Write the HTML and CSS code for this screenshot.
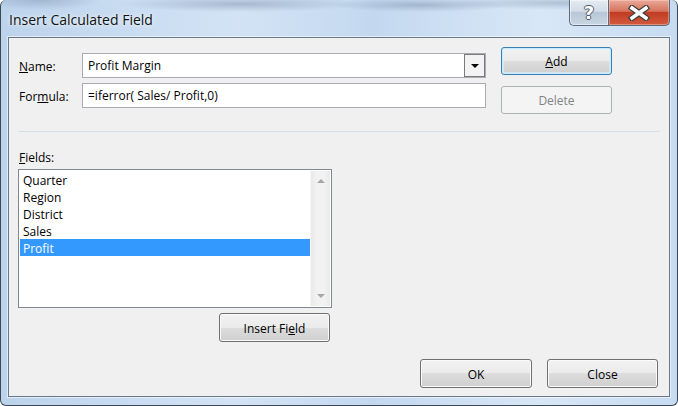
FILE: index.html
```html
<!DOCTYPE html>
<html>
<head>
    <meta charset="utf-8">
    <link rel="stylesheet" href="styles.css">
</head>
<body>

<div class="window">
    <div class="titlebar">
        <div class="title">Insert Calculated Field</div>
        <div class="caption">
            <div class="cap_btn help"><span>?</span></div>
            <div class="cap_btn close">
                <svg width="22" height="16" viewBox="0 0 22 16">
                    <path d="M4 3 L18 13 M18 3 L4 13" stroke="#3d3d3d" stroke-width="6" stroke-linecap="square"/>
                    <path d="M4 3 L18 13 M18 3 L4 13" stroke="#ffffff" stroke-width="3.5" stroke-linecap="square"/>
                </svg>
            </div>
        </div>
    </div>

    <div class="client">
        <div class="top">
            <div class="form">
                <div class="row">
                    <div class="label"><u>N</u>ame:</div>
                    <div class="field combo">
                        <span>Profit Margin</span>
                        <div class="drop"><i class="tri_down"></i></div>
                    </div>
                </div>
                <div class="row">
                    <div class="label">For<u>m</u>ula:</div>
                    <div class="field">=iferror( Sales/ Profit,0)</div>
                </div>
            </div>
            <div class="side">
                <div class="btn default"><span><u>A</u>dd</span></div>
                <div class="btn disabled">Delete</div>
            </div>
        </div>

        <div class="sep"></div>

        <div class="fields_label"><u>F</u>ields:</div>
        <div class="listbox">
            <ul class="items">
                <li>Quarter</li>
                <li>Region</li>
                <li>District</li>
                <li>Sales</li>
                <li class="selected">Profit</li>
            </ul>
            <div class="scrollbar">
                <i class="arrow_up"></i>
                <i class="arrow_down"></i>
            </div>
        </div>
        <div class="btn insert">Insert Fi<u>e</u>ld</div>

        <div class="footer">
            <div class="btn ok">OK</div>
            <div class="btn">Close</div>
        </div>
    </div>
</div>

</body>
</html>
```

FILE: styles.css
```css
body {
    margin: 0;
    font-family: "Open Sans", "Noto Sans", sans-serif;
    font-size: 12px;
    color: #000;
}
.window {
    width: 678px;
    height: 406px;
    box-sizing: border-box;
    border: 1px solid #3e4854;
    border-top: none;
    border-radius: 6px 6px 6px 6px;
    background:
        radial-gradient(ellipse 120px 8px at 240px 4px, rgba(90,110,140,0.35), transparent),
        radial-gradient(ellipse 90px 7px at 420px 5px, rgba(90,110,140,0.35), transparent),
        radial-gradient(ellipse 110px 7px at 560px 3px, rgba(90,110,140,0.3), transparent),
        radial-gradient(ellipse 60px 10px at 40px 0px, rgba(90,110,140,0.3), transparent),
        linear-gradient(90deg, #bcd3ec 0%, #d3e3f5 35%, #c3d8ef 55%, #d8e7f7 80%, #c6dbf1 100%);
    display: flex;
    flex-direction: column;
}
.titlebar {
    height: 37px;
    display: flex;
    align-items: flex-start;
}
.title {
    flex: 1;
    padding: 11px 0 0 8px;
    font-size: 14px;
    line-height: 18px;
    color: #111;
    text-shadow: 0 0 6px #eef5fc, 0 0 3px #eef5fc;
}
.caption {
    display: flex;
    margin-right: 7px;
}
.cap_btn {
    height: 26px;
    box-sizing: border-box;
    border: 1px solid #5c6b7d;
    border-top: none;
    display: flex;
    align-items: center;
    justify-content: center;
}
.help {
    width: 39px;
    border-right: none;
    border-radius: 0 0 0 5px;
    background: linear-gradient(#e3ebf3, #d2dce7 45%, #b8c7d7 50%, #c9d6e3);
    box-shadow: inset 0 0 0 1px rgba(255,255,255,0.5);
}
.help span {
    font-family: "DejaVu Sans", sans-serif;
    font-weight: bold;
    font-size: 18px;
    line-height: 18px;
    color: #fff;
    text-shadow: 1px 0 0 #505b68, -1px 0 0 #505b68, 0 1px 0 #505b68, 0 -1px 0 #505b68;
}
.close {
    width: 62px;
    border-radius: 0 0 5px 0;
    background: linear-gradient(#eaa99a, #d6735d 45%, #c13c22 50%, #d25a3f);
    box-shadow: inset 0 0 0 1px rgba(255,220,210,0.4);
}

.client {
    flex: 1;
    margin: 0 7px 8px 7px;
    border: 1px solid #6a7989;
    background: #f0f0f0;
    display: flex;
    flex-direction: column;
    box-shadow: 0 0 0 1px rgba(255,255,255,0.55);
}
.top {
    display: flex;
    height: 76px;
}
.form {
    padding: 15px 0 0 10px;
}
.row {
    display: flex;
    align-items: center;
    height: 25px;
}
.row + .row {
    margin-top: 5px;
}
.label {
    width: 63px;
    padding-top: 1px;
}
.field {
    width: 404px;
    height: 25px;
    box-sizing: border-box;
    border: 1px solid #a9abb0;
    background: #fff;
    padding-left: 5px;
    display: flex;
    align-items: center;
}
.combo span {
    flex: 1;
}
.drop {
    width: 21px;
    height: 23px;
    box-sizing: border-box;
    border: 1px solid #7b7b7b;
    background: #f3f3f3;
    display: flex;
    align-items: center;
    justify-content: center;
}
.tri_down {
    width: 0;
    height: 0;
    border-left: 4px solid transparent;
    border-right: 4px solid transparent;
    border-top: 4px solid #000;
}
.side {
    margin-left: 15px;
    padding-top: 9px;
    display: flex;
    flex-direction: column;
    gap: 11px;
}

.btn {
    width: 111px;
    height: 29px;
    box-sizing: border-box;
    border: 1px solid #707070;
    border-radius: 3px;
    background: linear-gradient(#f2f2f2 0%, #ebebeb 50%, #dddddd 50%, #cfcfcf 100%);
    box-shadow: inset 0 0 0 1px #fbfbfb;
    display: flex;
    align-items: center;
    justify-content: center;
    padding-top: 1px;
}
.side .btn {
    height: 28px;
}
.btn.default {
    border-color: #3c7fb1;
    box-shadow: inset 0 0 0 1px #c6eafb, inset 0 0 0 2px rgba(220,245,255,0.6);
}
.btn.disabled {
    border-color: #adb2b5;
    background: #f4f4f4;
    box-shadow: none;
    color: #838383;
}

.sep {
    height: 1px;
    background: #d5dfe6;
    margin: 17px 9px 0 10px;
}
.fields_label {
    margin: 18px 0 0 10px;
    line-height: 16px;
}
.listbox {
    margin: 3px 0 0 9px;
    width: 314px;
    height: 139px;
    box-sizing: border-box;
    border: 1px solid #828790;
    background: #fff;
    padding: 1px;
    display: flex;
}
.items {
    flex: 1;
    margin: 0;
    padding: 0;
    list-style: none;
}
.items li {
    height: 17px;
    line-height: 19px;
    padding-left: 3px;
    overflow: hidden;
}
.items li.selected {
    background: #3399ff;
    color: #fff;
}
.scrollbar {
    width: 20px;
    background: linear-gradient(90deg, #e9e9e9, #f2f2f2 30%, #f2f2f2 70%, #e9e9e9);
    border-left: 1px solid #f7f7f7;
    display: flex;
    flex-direction: column;
    align-items: center;
    justify-content: space-between;
    padding: 8px 0 8px;
    box-sizing: border-box;
}
.arrow_up {
    width: 0;
    height: 0;
    border-left: 4px solid transparent;
    border-right: 4px solid transparent;
    border-bottom: 4px solid #a7a7a7;
}
.arrow_down {
    width: 0;
    height: 0;
    border-left: 4px solid transparent;
    border-right: 4px solid transparent;
    border-top: 4px solid #a7a7a7;
}
.insert {
    margin: 5px 0 0 210px;
}
.footer {
    margin-top: auto;
    display: flex;
    justify-content: flex-end;
    gap: 15px;
    padding: 0 11px 8px 0;
}
.footer .ok {
    width: 112px;
}
```
